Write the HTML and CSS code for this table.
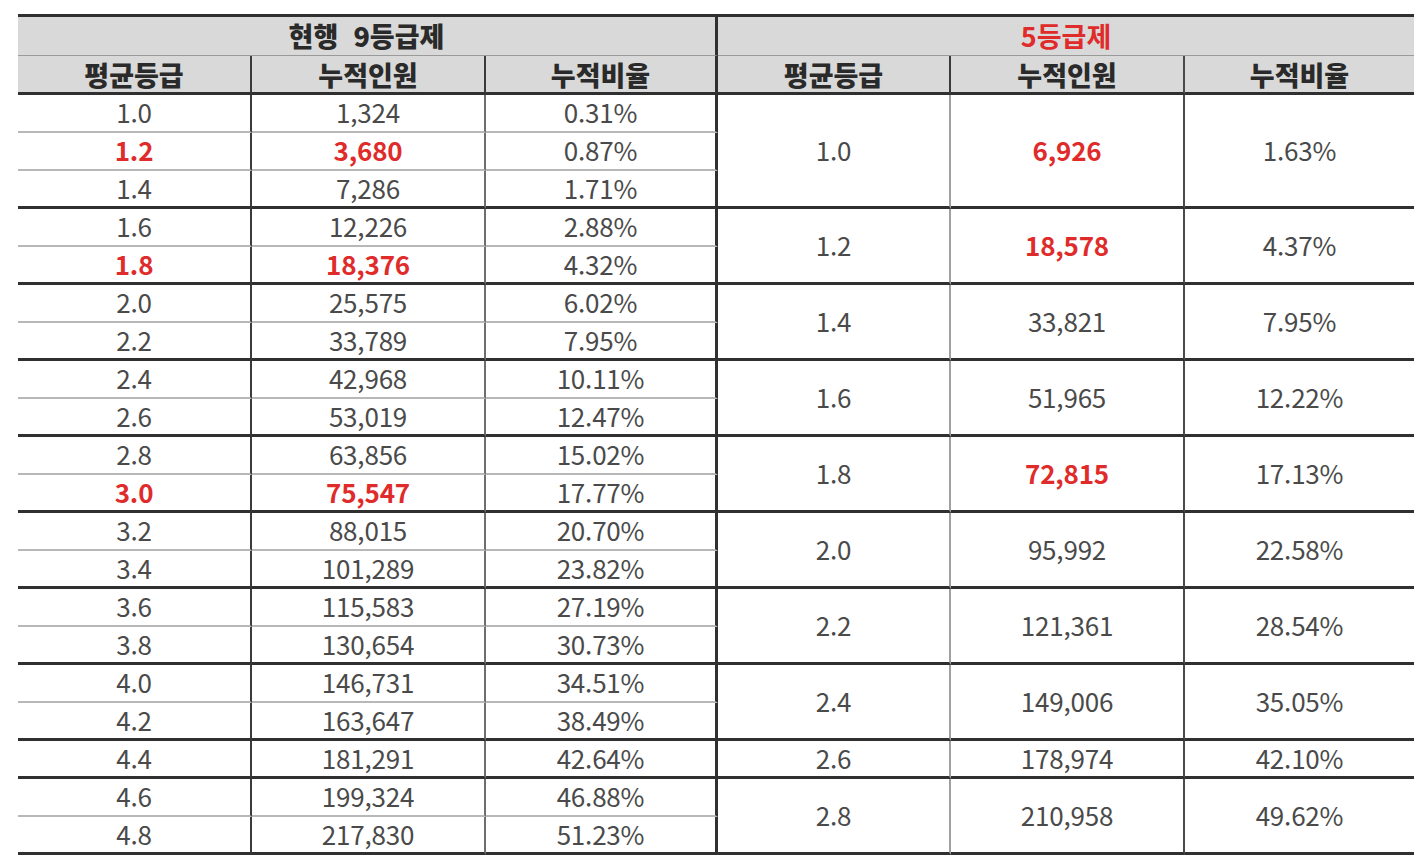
FILE: index.html
```html
<!DOCTYPE html>
<html lang="ko">
<head>
<meta charset="utf-8">
<title>등급제 비교</title>
<link rel="stylesheet" href="styles.css">
</head>
<body>
<div class="tbl">
  <div class="h1 c3">현행&nbsp; 9등급제</div>
  <div class="h1 r">5등급제</div>

  <div class="h2 c1">평균등급</div>
  <div class="h2 c2">누적인원</div>
  <div class="h2 c3">누적비율</div>
  <div class="h2 c4">평균등급</div>
  <div class="h2 c5">누적인원</div>
  <div class="h2 c6">누적비율</div>

  <div class="d c1">1.0</div><div class="d c2">1,324</div><div class="d c3">0.31%</div>
  <div class="d c4 g s3">1.0</div><div class="d c5 g s3 r">6,926</div><div class="d c6 g s3">1.63%</div>
  <div class="d c1 r">1.2</div><div class="d c2 r">3,680</div><div class="d c3">0.87%</div>
  <div class="d c1 g">1.4</div><div class="d c2 g">7,286</div><div class="d c3 g">1.71%</div>

  <div class="d c1">1.6</div><div class="d c2">12,226</div><div class="d c3">2.88%</div>
  <div class="d c4 g s2">1.2</div><div class="d c5 g s2 r">18,578</div><div class="d c6 g s2">4.37%</div>
  <div class="d c1 g r">1.8</div><div class="d c2 g r">18,376</div><div class="d c3 g">4.32%</div>

  <div class="d c1">2.0</div><div class="d c2">25,575</div><div class="d c3">6.02%</div>
  <div class="d c4 g s2">1.4</div><div class="d c5 g s2">33,821</div><div class="d c6 g s2">7.95%</div>
  <div class="d c1 g">2.2</div><div class="d c2 g">33,789</div><div class="d c3 g">7.95%</div>

  <div class="d c1">2.4</div><div class="d c2">42,968</div><div class="d c3">10.11%</div>
  <div class="d c4 g s2">1.6</div><div class="d c5 g s2">51,965</div><div class="d c6 g s2">12.22%</div>
  <div class="d c1 g">2.6</div><div class="d c2 g">53,019</div><div class="d c3 g">12.47%</div>

  <div class="d c1">2.8</div><div class="d c2">63,856</div><div class="d c3">15.02%</div>
  <div class="d c4 g s2">1.8</div><div class="d c5 g s2 r">72,815</div><div class="d c6 g s2">17.13%</div>
  <div class="d c1 g r">3.0</div><div class="d c2 g r">75,547</div><div class="d c3 g">17.77%</div>

  <div class="d c1">3.2</div><div class="d c2">88,015</div><div class="d c3">20.70%</div>
  <div class="d c4 g s2">2.0</div><div class="d c5 g s2">95,992</div><div class="d c6 g s2">22.58%</div>
  <div class="d c1 g">3.4</div><div class="d c2 g">101,289</div><div class="d c3 g">23.82%</div>

  <div class="d c1">3.6</div><div class="d c2">115,583</div><div class="d c3">27.19%</div>
  <div class="d c4 g s2">2.2</div><div class="d c5 g s2">121,361</div><div class="d c6 g s2">28.54%</div>
  <div class="d c1 g">3.8</div><div class="d c2 g">130,654</div><div class="d c3 g">30.73%</div>

  <div class="d c1">4.0</div><div class="d c2">146,731</div><div class="d c3">34.51%</div>
  <div class="d c4 g s2">2.4</div><div class="d c5 g s2">149,006</div><div class="d c6 g s2">35.05%</div>
  <div class="d c1 g">4.2</div><div class="d c2 g">163,647</div><div class="d c3 g">38.49%</div>

  <div class="d c1 g">4.4</div><div class="d c2 g">181,291</div><div class="d c3 g">42.64%</div>
  <div class="d c4 g">2.6</div><div class="d c5 g">178,974</div><div class="d c6 g">42.10%</div>

  <div class="d c1">4.6</div><div class="d c2">199,324</div><div class="d c3">46.88%</div>
  <div class="d c4 g s2">2.8</div><div class="d c5 g s2">210,958</div><div class="d c6 g s2">49.62%</div>
  <div class="d c1 g">4.8</div><div class="d c2 g">217,830</div><div class="d c3 g">51.23%</div>
</div>
</body>
</html>
```

FILE: styles.css
```css
html, body {
  margin: 0;
  padding: 0;
  background: #ffffff;
}
body {
  padding: 14px 0 0 18px;
  font-family: "Noto Sans CJK KR", "Noto Sans", sans-serif;
}
.tbl {
  display: grid;
  width: 1396px;
  grid-template-columns: 234px 234px 232px 233px 234px 229px;
  grid-template-rows: 39px 39px repeat(20, 38px);
  border-top: 3px solid #303030;
}
.tbl > div {
  box-sizing: border-box;
  display: flex;
  align-items: center;
  justify-content: center;
  white-space: nowrap;
  line-height: 1;
}
.h1 {
  grid-column: span 3;
  background: #d9d9d9;
  border-bottom: 1px solid #9a9a9a;
  font-size: 27px;
  font-weight: 800;
  color: #2a2a2a;
  letter-spacing: 0;
  padding-bottom: 2px;
}
.h1.c3 {
  border-right: 3px solid #303030;
}
.h2 {
  background: #d9d9d9;
  border-bottom: 3px solid #303030;
  font-size: 27px;
  font-weight: 800;
  color: #2a2a2a;
  letter-spacing: 0;
}
.d {
  border-bottom: 2px solid #b8b8b8;
  font-size: 26px;
  color: #4a4a4a;
  letter-spacing: -0.2px;
  padding-bottom: 2px;
}
.c1 { border-right: 2px solid #3a3a3a; }
.c2 { border-right: 2px solid #6e6e6e; }
.h2.c2 { border-right-color: #3a3a3a; }
.c3 { border-right: 3px solid #303030; }
.c4 { border-right: 2px solid #a0a0a0; }
.h2.c4 { border-right-color: #3a3a3a; }
.c5 { border-right: 2px solid #4a4a4a; }
.d.g { border-bottom: 3px solid #303030; }
.s2 { grid-row: span 2; }
.s3 { grid-row: span 3; }
.r {
  color: #e02b2b;
  font-weight: 700;
}
.h1.r { color: #e02b2b; }
```
